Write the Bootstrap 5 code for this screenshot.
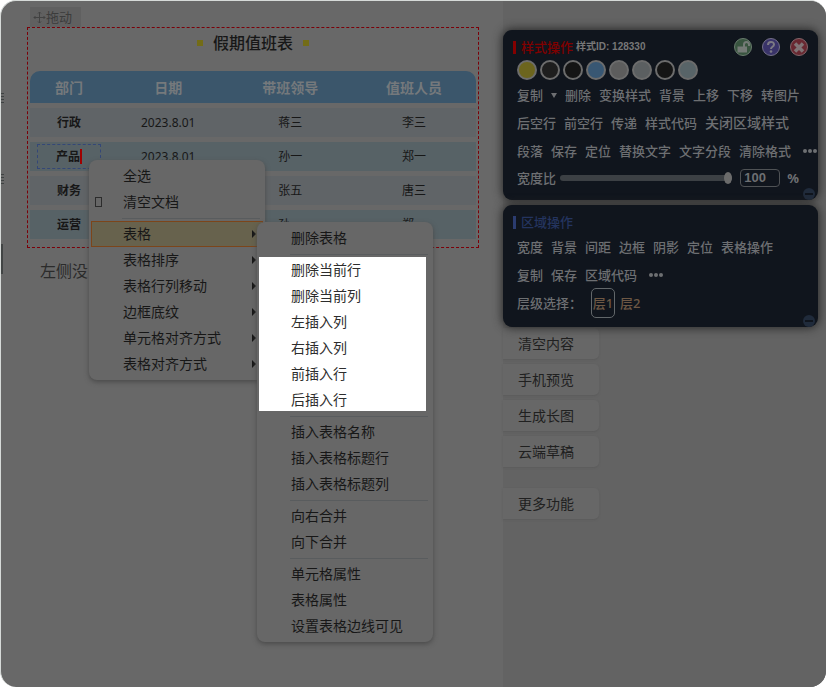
<!DOCTYPE html>
<html lang="zh-CN">
<head>
<meta charset="utf-8">
<meta name="viewport" content="width=device-width, initial-scale=1">
<title>假期值班表</title>
<link href="https://cdn.jsdelivr.net/npm/bootstrap@5.3.0/dist/css/bootstrap.min.css" rel="stylesheet">
<style>
body{font-family:"Noto Sans","Noto Sans CJK SC",sans-serif;font-size:14px;line-height:20px;color:#171717;background:#fff}
button{font:inherit;color:inherit;background:none;border:0;padding:0;text-align:left;white-space:nowrap}
.app-frame{min-height:100vh;border:solid #d6dad8;border-width:1px 0 0 1px;border-radius:16px;background:#686868;overflow:hidden;display:grid;grid-template-columns:minmax(0,1fr) 323px}
.canvas-area{padding:6px 24px 0 26px}
.drag-tab{margin-left:3px;width:51px;height:20px;background:#606060;color:#3c3c3c;font-size:13px;padding-left:3px}
.selected-block{border:1px dashed #7b0008;padding:0 2px 7px;height:221px}
.doc-title{font-size:16px;line-height:30px;font-weight:500;margin:0 0 8px;gap:10px}
.sq{width:6px;height:6px;background:#736c17}
.duty{border-collapse:separate;border-spacing:0 5px;table-layout:fixed;width:100%;text-align:center;font-size:12px;line-height:17px}
.duty th,.duty td{padding:0;height:29px}
.duty thead th{height:32px;background:#3b566b;color:#75797c;font-size:14px;font-weight:700}
.duty thead th:first-child{border-top-left-radius:10px}
.duty thead th:last-child{border-top-right-radius:10px}
.duty tbody tr{background:#606467}
.duty tbody tr:nth-child(even){background:#576266}
.duty tbody th{font-weight:700}
.edit-cell{margin:0 7px;border:1px dashed #344777;height:25px;line-height:23px}
.caret-line{width:2px;height:15px;background:#a00000}
.after-text{font-size:16px;line-height:24px;margin:11px 0 0 13px;color:#2b2b2b}
.ctx{position:absolute;width:176px;padding:3px 2px;border-radius:8px;background:#676767;box-shadow:0 2px 5px #4a4a4a;list-style:none;margin:0}
.ctx ul{list-style:none}
.ctx button{display:flex;align-items:center;width:100%;height:26px;padding-left:32px;position:relative}
.ctx .rule{height:1px;background:#595c5e;margin:3px 3px 2px 31px}
.ctx-main{left:89px;top:160px}
.ctx-sub{left:257px;top:222px}
.ctx .on{background:#67624d;box-shadow:inset 0 0 0 1px #7c451a}
.arrow{margin-left:auto;margin-right:7px;border:solid transparent;border-width:4px 0 4px 4px;border-left-color:#161616}
.missing{position:absolute;left:4px;width:7px;height:10px;border:1px solid #2c2c2c}
.lit{margin-right:5px;color:#2d2d2d;background:linear-gradient(#fff,#fff) no-repeat 0 0/100% calc(100% - 2px)}
.side{background:#636363;padding:29px 8px 0 0}
.tool-panel{position:relative;background:#10151d;color:#6d6f72;border-radius:9px;box-shadow:0 0 10px 1px #292929;font-size:13px;font-weight:500;padding:6px 0 10px 10px}
.tool-panel.blue{margin-top:5px}
.panel-head{height:22px}
.head-icons{margin:0 9px 0 auto;gap:8px}
.bar{width:3px;height:13px;margin-right:5px;background:#840000}
.panel-head h2{font-size:13px;line-height:20px;font-weight:500;margin:0;color:#800000}
.blue .bar{background:#2b3c70}.blue h2{color:#24345f}
.style-id{font:bold 10px/20px "Liberation Sans","Noto Sans CJK SC",sans-serif;margin-left:3px;color:#777}
.tools{height:28px;padding-left:4px;gap:8px}
.dots-row{padding:2px 0 1px 4px;gap:3px}
.dot{width:20px;height:20px;border-radius:50%;border:2px solid #6c6c6c}
.c1{background:#6c651e}.c2{background:#1e1e1e}.c3{background:#151515}.c4{background:#385773}.c5{background:#5d5d5d}.c6{background:#5b5f61}.c7{background:#586468}
.down{border:solid transparent;border-width:5px 3px 0;border-top-color:#6d6f72}
.wide{font-size:14px}
.width-row{height:25px;padding:0 19px 0 4px}
.width-row input[type=range]{appearance:none;flex:1;min-width:0;height:14px;background:none;margin:0 8px 0 4px}
.width-row input::-webkit-slider-runnable-track{height:6px;border-radius:3px;background:#3c4044}
.width-row input::-webkit-slider-thumb{appearance:none;width:8px;height:12px;margin-top:-3px;border-radius:50%;background:#6b6b6b}
.num{width:40px;height:18px;border:1px solid #4f5255;border-radius:4px;background:none;color:#6d6f72;font:bold 13px "Liberation Sans",sans-serif;padding:0 3px;margin-right:7px}
.fold{position:absolute;right:3px;bottom:0}
.layers{gap:5px}
.layer{color:#6e5844}
.layer.cur{border:1px solid #62676a;border-radius:5px;height:30px;width:24px;text-align:center}
.side-nav{gap:5px;padding-top:1px}
.side-btn{width:96px;height:31px;padding-left:15px;background:#676767;border-radius:0 5px 5px 0;box-shadow:0 1px 2px #5b5b5b;color:#202020}
.edge-lines{position:absolute;left:0;width:3px;height:12px;background:repeating-linear-gradient(#3e4242 0 1px,#686868 1px 3px)}
.edge-a{top:92px}.edge-b{top:173px}
.edge-thumb{position:absolute;left:0;top:243px;width:2px;height:30px;background:#414444}
</style>
<script src="https://cdn.jsdelivr.net/npm/bootstrap@5.3.0/dist/js/bootstrap.bundle.min.js"></script>
</head>
<body>
<div class="app-frame position-relative">
<span class="edge-lines edge-a"></span><span class="edge-lines edge-b"></span><span class="edge-thumb"></span>
<main class="canvas-area">
  <div class="drag-tab d-flex align-items-center"><svg width="13" height="13" viewBox="0 0 13 13" fill="none" stroke="#424242"><path d="M6.500 1v11M1 6.500h11M5 2.500L6.500 1 8 2.500M5 10.500L6.500 12 8 10.500M2.500 5L1 6.500 2.500 8M10.500 5L12 6.500 10.500 8"/></svg>拖动</div>
  <section class="selected-block">
    <h1 class="doc-title d-flex justify-content-center align-items-center"><span class="sq"></span>假期值班表<span class="sq"></span></h1>
    <table class="duty">
      <colgroup><col style="width:17.5%"><col style="width:27%"><col style="width:27.75%"><col style="width:27.75%"></colgroup>
      <thead><tr><th>部门</th><th>日期</th><th>带班领导</th><th>值班人员</th></tr></thead>
      <tbody>
        <tr><th>行政</th><td>2023.8.01</td><td>蒋三</td><td>李三</td></tr>
        <tr><th><div class="edit-cell d-flex justify-content-center align-items-center">产品<span class="caret-line"></span></div></th><td>2023.8.01</td><td>孙一</td><td>郑一</td></tr>
        <tr><th>财务</th><td></td><td>张五</td><td>唐三</td></tr>
        <tr><th>运营</th><td></td><td>孙一</td><td>郑一</td></tr>
      </tbody>
    </table>
  </section>
  <p class="after-text">左侧没</p>
</main>
<aside class="side">
  <section class="tool-panel">
    <div class="panel-head d-flex align-items-center"><span class="bar"></span><h2>样式操作</h2><span class="style-id">样式ID: 128330</span>
      <div class="head-icons d-flex">
        <button aria-label="解锁"><svg class="d-block" width="20" height="20" viewBox="0 0 20 20"><circle cx="10" cy="10" r="8.500" fill="#38543f" stroke="#697b6d"/><path d="M4.500 9.500h9.500v6H4.500z" fill="#747a76"/><path d="M11 10V7.500a2.500 2.500 0 0 1 5 0V9" fill="none" stroke="#747a76" stroke-width="2"/></svg></button>
        <button aria-label="帮助"><svg class="d-block" width="20" height="20" viewBox="0 0 20 20"><circle cx="10" cy="10" r="8.500" fill="#393369" stroke="#747087"/><path d="M7 8c0-4 6-4 6-.5C13 10 10 9.500 10 12" fill="none" stroke="#7c7a84" stroke-width="2"/><circle cx="10" cy="14.500" r="1.300" fill="#7c7a84"/></svg></button>
        <button aria-label="关闭"><svg class="d-block" width="20" height="20" viewBox="0 0 20 20"><circle cx="10" cy="10" r="8.500" fill="#692831" stroke="#83666a"/><path d="M6 6.500l8 8M14 6.500l-8 8" stroke="#807476" stroke-width="3.500"/></svg></button>
      </div>
    </div>
    <div class="dots-row d-flex">
      <button class="dot c1" aria-label="黄色"></button><button class="dot c2" aria-label="深灰"></button><button class="dot c3" aria-label="黑色"></button><button class="dot c4" aria-label="蓝色"></button><button class="dot c5" aria-label="白色"></button><button class="dot c6" aria-label="浅蓝"></button><button class="dot c3" aria-label="黑色"></button><button class="dot c7" aria-label="淡青"></button>
    </div>
    <div class="tools d-flex align-items-center"><button>复制</button><span class="down"></span><button>删除</button><button>变换样式</button><button>背景</button><button>上移</button><button>下移</button><button>转图片</button></div>
    <div class="tools d-flex align-items-center"><button>后空行</button><button>前空行</button><button>传递</button><button>样式代码</button><button class="wide">关闭区域样式</button></div>
    <div class="tools d-flex align-items-center"><button>段落</button><button>保存</button><button>定位</button><button>替换文字</button><button>文字分段</button><button>清除格式</button><button class="ms-1" aria-label="更多"><svg class="d-block" width="14" height="4" fill="#6d6f72"><circle cx="2" cy="2" r="2"/><circle cx="7" cy="2" r="2"/><circle cx="12" cy="2" r="2"/></svg></button></div>
    <div class="width-row d-flex align-items-center"><label for="ratio">宽度比</label><input id="ratio" type="range" value="100"><input class="num" aria-label="宽度百分比" value="100"><b>%</b></div>
    <button class="fold" aria-label="收起"><svg class="d-block" width="12" height="12"><circle cx="6" cy="6" r="6" fill="#202b3b"/><path d="M2 6h8" stroke="#10151d" stroke-width="2"/></svg></button>
  </section>
  <section class="tool-panel blue">
    <div class="panel-head d-flex align-items-center"><span class="bar"></span><h2>区域操作</h2></div>
    <div class="tools d-flex align-items-center"><button>宽度</button><button>背景</button><button>间距</button><button>边框</button><button>阴影</button><button>定位</button><button>表格操作</button></div>
    <div class="tools d-flex align-items-center"><button>复制</button><button>保存</button><button>区域代码</button><button class="ms-1" aria-label="更多"><svg class="d-block" width="14" height="4" fill="#6d6f72"><circle cx="2" cy="2" r="2"/><circle cx="7" cy="2" r="2"/><circle cx="12" cy="2" r="2"/></svg></button></div>
    <div class="tools layers d-flex align-items-center"><span class="me-1">层级选择：</span><button class="layer cur">层1</button><button class="layer">层2</button></div>
    <button class="fold" aria-label="收起"><svg class="d-block" width="12" height="12"><circle cx="6" cy="6" r="6" fill="#202b3b"/><path d="M2 6h8" stroke="#10151d" stroke-width="2"/></svg></button>
  </section>
  <nav class="side-nav d-grid">
    <button class="side-btn">清空内容</button><button class="side-btn">手机预览</button><button class="side-btn">生成长图</button><button class="side-btn">云端草稿</button><button class="side-btn mt-3">更多功能</button>
  </nav>
</aside>
</div>
<ul class="ctx ctx-main">
  <li><button>全选</button></li>
  <li><button><span class="missing"></span>清空文档</button></li>
  <li class="rule"></li>
  <li><button class="on">表格<span class="arrow"></span></button></li>
  <li><button>表格排序<span class="arrow"></span></button></li>
  <li><button>表格行列移动<span class="arrow"></span></button></li>
  <li><button>边框底纹<span class="arrow"></span></button></li>
  <li><button>单元格对齐方式<span class="arrow"></span></button></li>
  <li><button>表格对齐方式<span class="arrow"></span></button></li>
</ul>
<ul class="ctx ctx-sub">
  <li><button>删除表格</button></li>
  <li class="rule"></li>
  <li><ul class="lit p-0"><li><button>删除当前行</button></li><li><button>删除当前列</button></li><li><button>左插入列</button></li><li><button>右插入列</button></li><li><button>前插入行</button></li><li><button>后插入行</button></li></ul></li>
  <li class="rule"></li>
  <li><button>插入表格名称</button></li>
  <li><button>插入表格标题行</button></li>
  <li><button>插入表格标题列</button></li>
  <li class="rule"></li>
  <li><button>向右合并</button></li>
  <li><button>向下合并</button></li>
  <li class="rule"></li>
  <li><button>单元格属性</button></li>
  <li><button>表格属性</button></li>
  <li><button>设置表格边线可见</button></li>
</ul>
</body>
</html>
